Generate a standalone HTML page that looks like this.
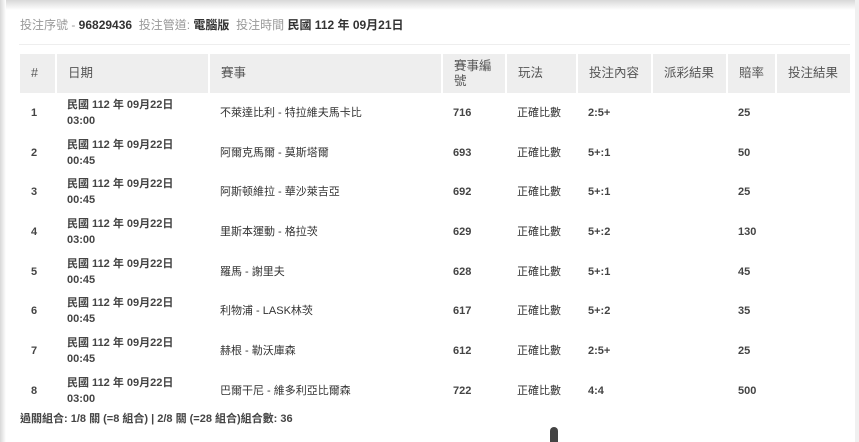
<!DOCTYPE html>
<html><head><meta charset="utf-8"><style>
html,body{margin:0;padding:0;width:859px;height:442px;overflow:hidden;background:#fff;font-family:"Liberation Sans","Noto Sans CJK TC",sans-serif;color:#444;}
.top{position:absolute;left:0;top:0;width:859px;height:10px;background:linear-gradient(#d8d8d8,#fff);}
.left{position:absolute;left:0;top:0;width:6px;height:442px;background:linear-gradient(90deg,#d8d8d8,#fff);}
.right{position:absolute;left:855px;top:0;width:4px;height:442px;background:#f0f0f0;}
.hd{position:absolute;left:20px;top:17px;font-size:12px;line-height:16px;white-space:nowrap;}
.hd .l{color:#999;}
.hd b{color:#333;}
.line{position:absolute;left:19px;top:44px;width:831px;height:1px;background:#eee;}
table{position:absolute;left:20px;top:54px;border-collapse:collapse;table-layout:fixed;width:831px;font-size:11px;}
th{background:#eee;color:#555;font-weight:normal;text-align:left;height:39px;padding:0 0 0 11px;border-right:2px solid #fff;font-size:12.5px;line-height:15px;}
td{height:39.7px;padding:0 0 0 11px;font-weight:bold;line-height:16px;color:#444;}
tr.r{height:39.7px;}
td.n{font-weight:normal;color:#333;}
.ft{position:absolute;left:20px;top:410px;font-size:11px;font-weight:bold;color:#444;}
.th{position:absolute;left:550px;top:427px;width:8px;height:15px;background:#444;border-radius:4px 4px 0 0;}
</style></head><body>
<div class="top"></div><div class="left"></div><div class="right"></div>
<div class="hd"><span class="l">投注序號 - </span><b>96829436</b>&nbsp; <span class="l">投注管道:</span> <b>電腦版</b>&nbsp; <span class="l">投注時間</span> <b>民國 112 年 09月21日</b></div>
<div class="line"></div>
<table>
<colgroup><col style="width:36px"><col style="width:153px"><col style="width:233px"><col style="width:64px"><col style="width:71px"><col style="width:75px"><col style="width:75px"><col style="width:49px"><col style="width:75px"></colgroup>
<tr><th>#</th><th>日期</th><th>賽事</th><th>賽事編<br>號</th><th>玩法</th><th>投注內容</th><th>派彩結果</th><th>賠率</th><th>投注結果</th></tr>
<tr class="r"><td>1</td><td>民國 112 年 09月22日<br>03:00</td><td class="n">不萊達比利 - 特拉維夫馬卡比</td><td>716</td><td class="n">正確比數</td><td>2:5+</td><td></td><td>25</td><td></td></tr>
<tr class="r"><td>2</td><td>民國 112 年 09月22日<br>00:45</td><td class="n">阿爾克馬爾 - 莫斯塔爾</td><td>693</td><td class="n">正確比數</td><td>5+:1</td><td></td><td>50</td><td></td></tr>
<tr class="r"><td>3</td><td>民國 112 年 09月22日<br>00:45</td><td class="n">阿斯顿維拉 - 華沙萊吉亞</td><td>692</td><td class="n">正確比數</td><td>5+:1</td><td></td><td>25</td><td></td></tr>
<tr class="r"><td>4</td><td>民國 112 年 09月22日<br>03:00</td><td class="n">里斯本運動 - 格拉茨</td><td>629</td><td class="n">正確比數</td><td>5+:2</td><td></td><td>130</td><td></td></tr>
<tr class="r"><td>5</td><td>民國 112 年 09月22日<br>00:45</td><td class="n">羅馬 - 謝里夫</td><td>628</td><td class="n">正確比數</td><td>5+:1</td><td></td><td>45</td><td></td></tr>
<tr class="r"><td>6</td><td>民國 112 年 09月22日<br>00:45</td><td class="n">利物浦 - LASK林茨</td><td>617</td><td class="n">正確比數</td><td>5+:2</td><td></td><td>35</td><td></td></tr>
<tr class="r"><td>7</td><td>民國 112 年 09月22日<br>00:45</td><td class="n">赫根 - 勒沃庫森</td><td>612</td><td class="n">正確比數</td><td>2:5+</td><td></td><td>25</td><td></td></tr>
<tr class="r"><td>8</td><td>民國 112 年 09月22日<br>03:00</td><td class="n">巴爾干尼 - 維多利亞比爾森</td><td>722</td><td class="n">正確比數</td><td>4:4</td><td></td><td>500</td><td></td></tr>
</table>
<div class="ft">過關組合: 1/8 關 (=8 組合) | 2/8 關 (=28 組合)組合數: 36</div>
<div class="th"></div>
</body></html>
